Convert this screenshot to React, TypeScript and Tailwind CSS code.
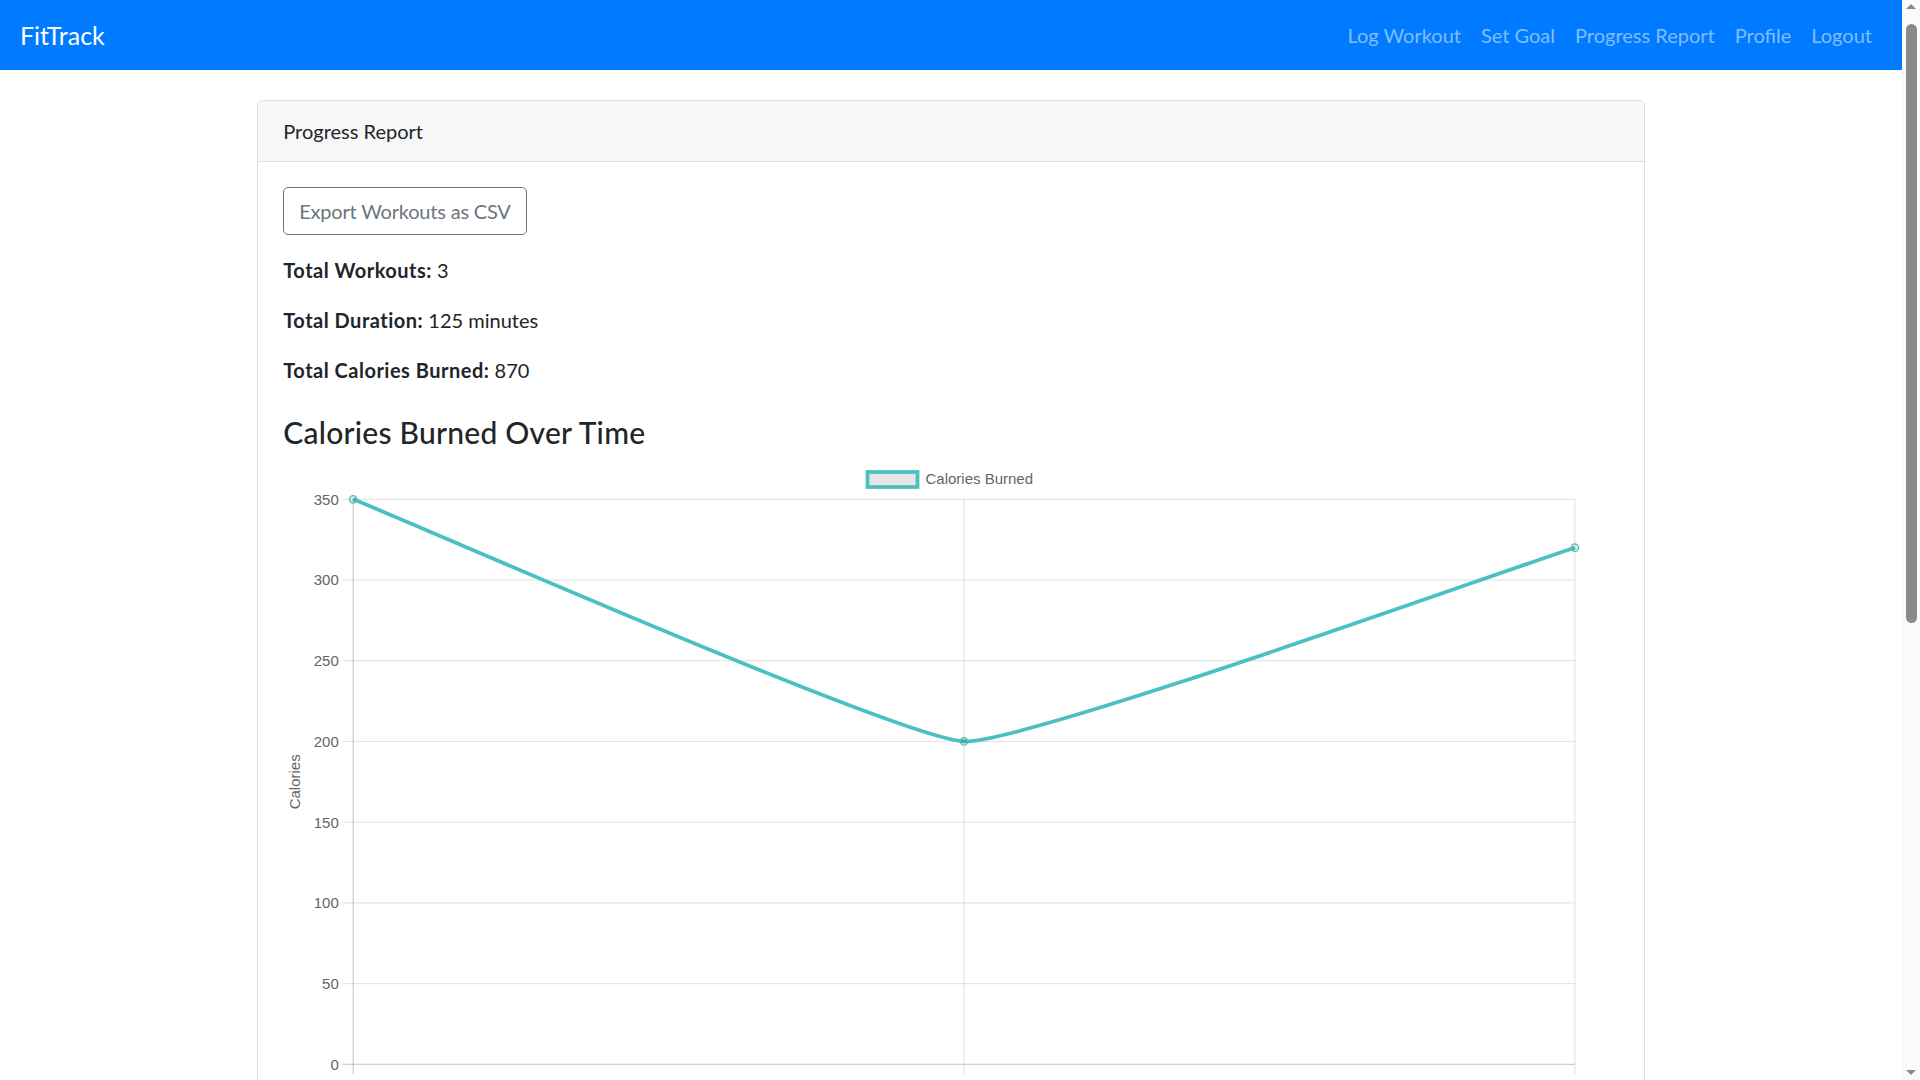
import React from "react";

const TEAL = "rgb(75,192,192)";

function Chart() {
  const gridYs = [0, 1, 2, 3, 4, 5, 6, 7].map((i) => 49.3 + i * 80.71);
  const labels = ["350", "300", "250", "200", "150", "100", "50", "0"];
  const xs = [70.2, 681, 1291.8];
  const pts: [number, number][] = [
    [70.2, 49.3],
    [681, 291.4],
    [1291.8, 97.7],
  ];
  return (
    <svg width={1335} height={680} className="block" style={{ fontFamily: '"Liberation Sans", Arial, sans-serif' }}>
      <rect x={584.5} y={22} width={50} height={15} fill="rgba(0,0,0,0.1)" stroke={TEAL} strokeWidth={3.75} />
      <text x={642.5} y={33.5} fontSize={15} fill="#666">Calories Burned</text>
      {gridYs.map((y, i) => (
        <line key={"h" + i} x1={60.2} x2={1291.8} y1={y} y2={y} stroke={i === 7 ? "rgba(0,0,0,0.19)" : "rgba(0,0,0,0.1)"} strokeWidth={1.25} />
      ))}
      {xs.map((x, i) => (
        <line key={"v" + i} x1={x} x2={x} y1={49.3} y2={624.3} stroke={i === 0 ? "rgba(0,0,0,0.19)" : "rgba(0,0,0,0.1)"} strokeWidth={1.25} />
      ))}
      {gridYs.map((y, i) => (
        <text key={"l" + i} x={55.8} y={y + 5.4} fontSize={15} fill="#666" textAnchor="end">
          {labels[i]}
        </text>
      ))}
      <text transform="translate(17.2, 331.8) rotate(-90)" fontSize={15} fill="#666" textAnchor="middle">
        Calories
      </text>
      <path
        d="M70.2 49.3 C131.3 73.5 619.2 288.95 681 291.4 C741.3 293.8 1230.7 117.1 1291.8 97.7"
        fill="none"
        stroke={TEAL}
        strokeWidth={3.75}
        strokeLinejoin="round"
      />
      {pts.map(([x, y], i) => (
        <circle key={"p" + i} cx={x} cy={y} r={3.75} fill="rgba(0,0,0,0.1)" stroke={TEAL} strokeWidth={1.25} />
      ))}
    </svg>
  );
}

function FakeScrollbar() {
  return (
    <div className="fixed right-0 top-0 w-[18px] h-[1080px] bg-[#fafafa] flex flex-col items-center pt-[4px] pb-[5px]">
      <div className="w-0 h-0 border-l-[5px] border-r-[5px] border-b-[5px] border-l-transparent border-r-transparent border-b-[#8a8a8a]" />
      <div className="mt-[15px] w-[11px] h-[599px] rounded-full bg-[#8a8a8a]" />
      <div className="flex-1" />
      <div className="w-0 h-0 border-l-[5px] border-r-[5px] border-t-[5px] border-l-transparent border-r-transparent border-t-[#8a8a8a]" />
    </div>
  );
}

export default function App() {
  const links = ["Log Workout", "Set Goal", "Progress Report", "Profile", "Logout"];
  return (
    <div className="w-[1902px] min-h-[1880px] bg-white text-[#212529]" style={{ fontFamily: 'Lato, "Noto Sans", sans-serif' }}>
      <nav className="h-[70px] bg-[#007bff] flex items-center justify-between px-[20px]">
        <a className="text-[25px] leading-[37px] text-white">FitTrack</a>
        <ul className="flex">
          {links.map((l) => (
            <li key={l} className="px-[10px] text-[20px] leading-[30px] text-[#80bdff]">
              {l}
            </li>
          ))}
        </ul>
      </nav>
      <div className="w-[1425px] mx-auto px-[18.75px] pt-[30px]">
        <div className="border-[1.25px] border-[#dfdfdf] rounded-[5px] bg-white">
          <div className="h-[61.25px] px-[25px] bg-[#f7f7f7] border-b-[1.25px] border-[#dfdfdf] flex items-center text-[20px] rounded-t-[5px]">
            Progress Report
          </div>
          <div className="p-[25px]">
            <button className="h-[47.5px] px-[15px] border-[1.25px] border-[#6c757d] rounded-[5px] text-[#6c757d] text-[20px] leading-[30px] bg-white tracking-[-0.2px]">
              Export Workouts as CSV
            </button>
            <p className="mt-[20px] text-[20px] leading-[30px]">
              <strong className="font-bold tracking-[0.5px]">Total Workouts:</strong> 3
            </p>
            <p className="mt-[20px] text-[20px] leading-[30px]">
              <strong className="font-bold tracking-[0.5px]">Total Duration:</strong> 125 minutes
            </p>
            <p className="mt-[20px] text-[20px] leading-[30px]">
              <strong className="font-bold tracking-[0.5px]">Total Calories Burned:</strong> 870
            </p>
            <h4 className="mt-[29px] h-[36px] text-[30px] leading-[36px] font-medium tracking-[0.25px]">Calories Burned Over Time</h4>
            <Chart />
          </div>
        </div>
      </div>
      <FakeScrollbar />
    </div>
  );
}
